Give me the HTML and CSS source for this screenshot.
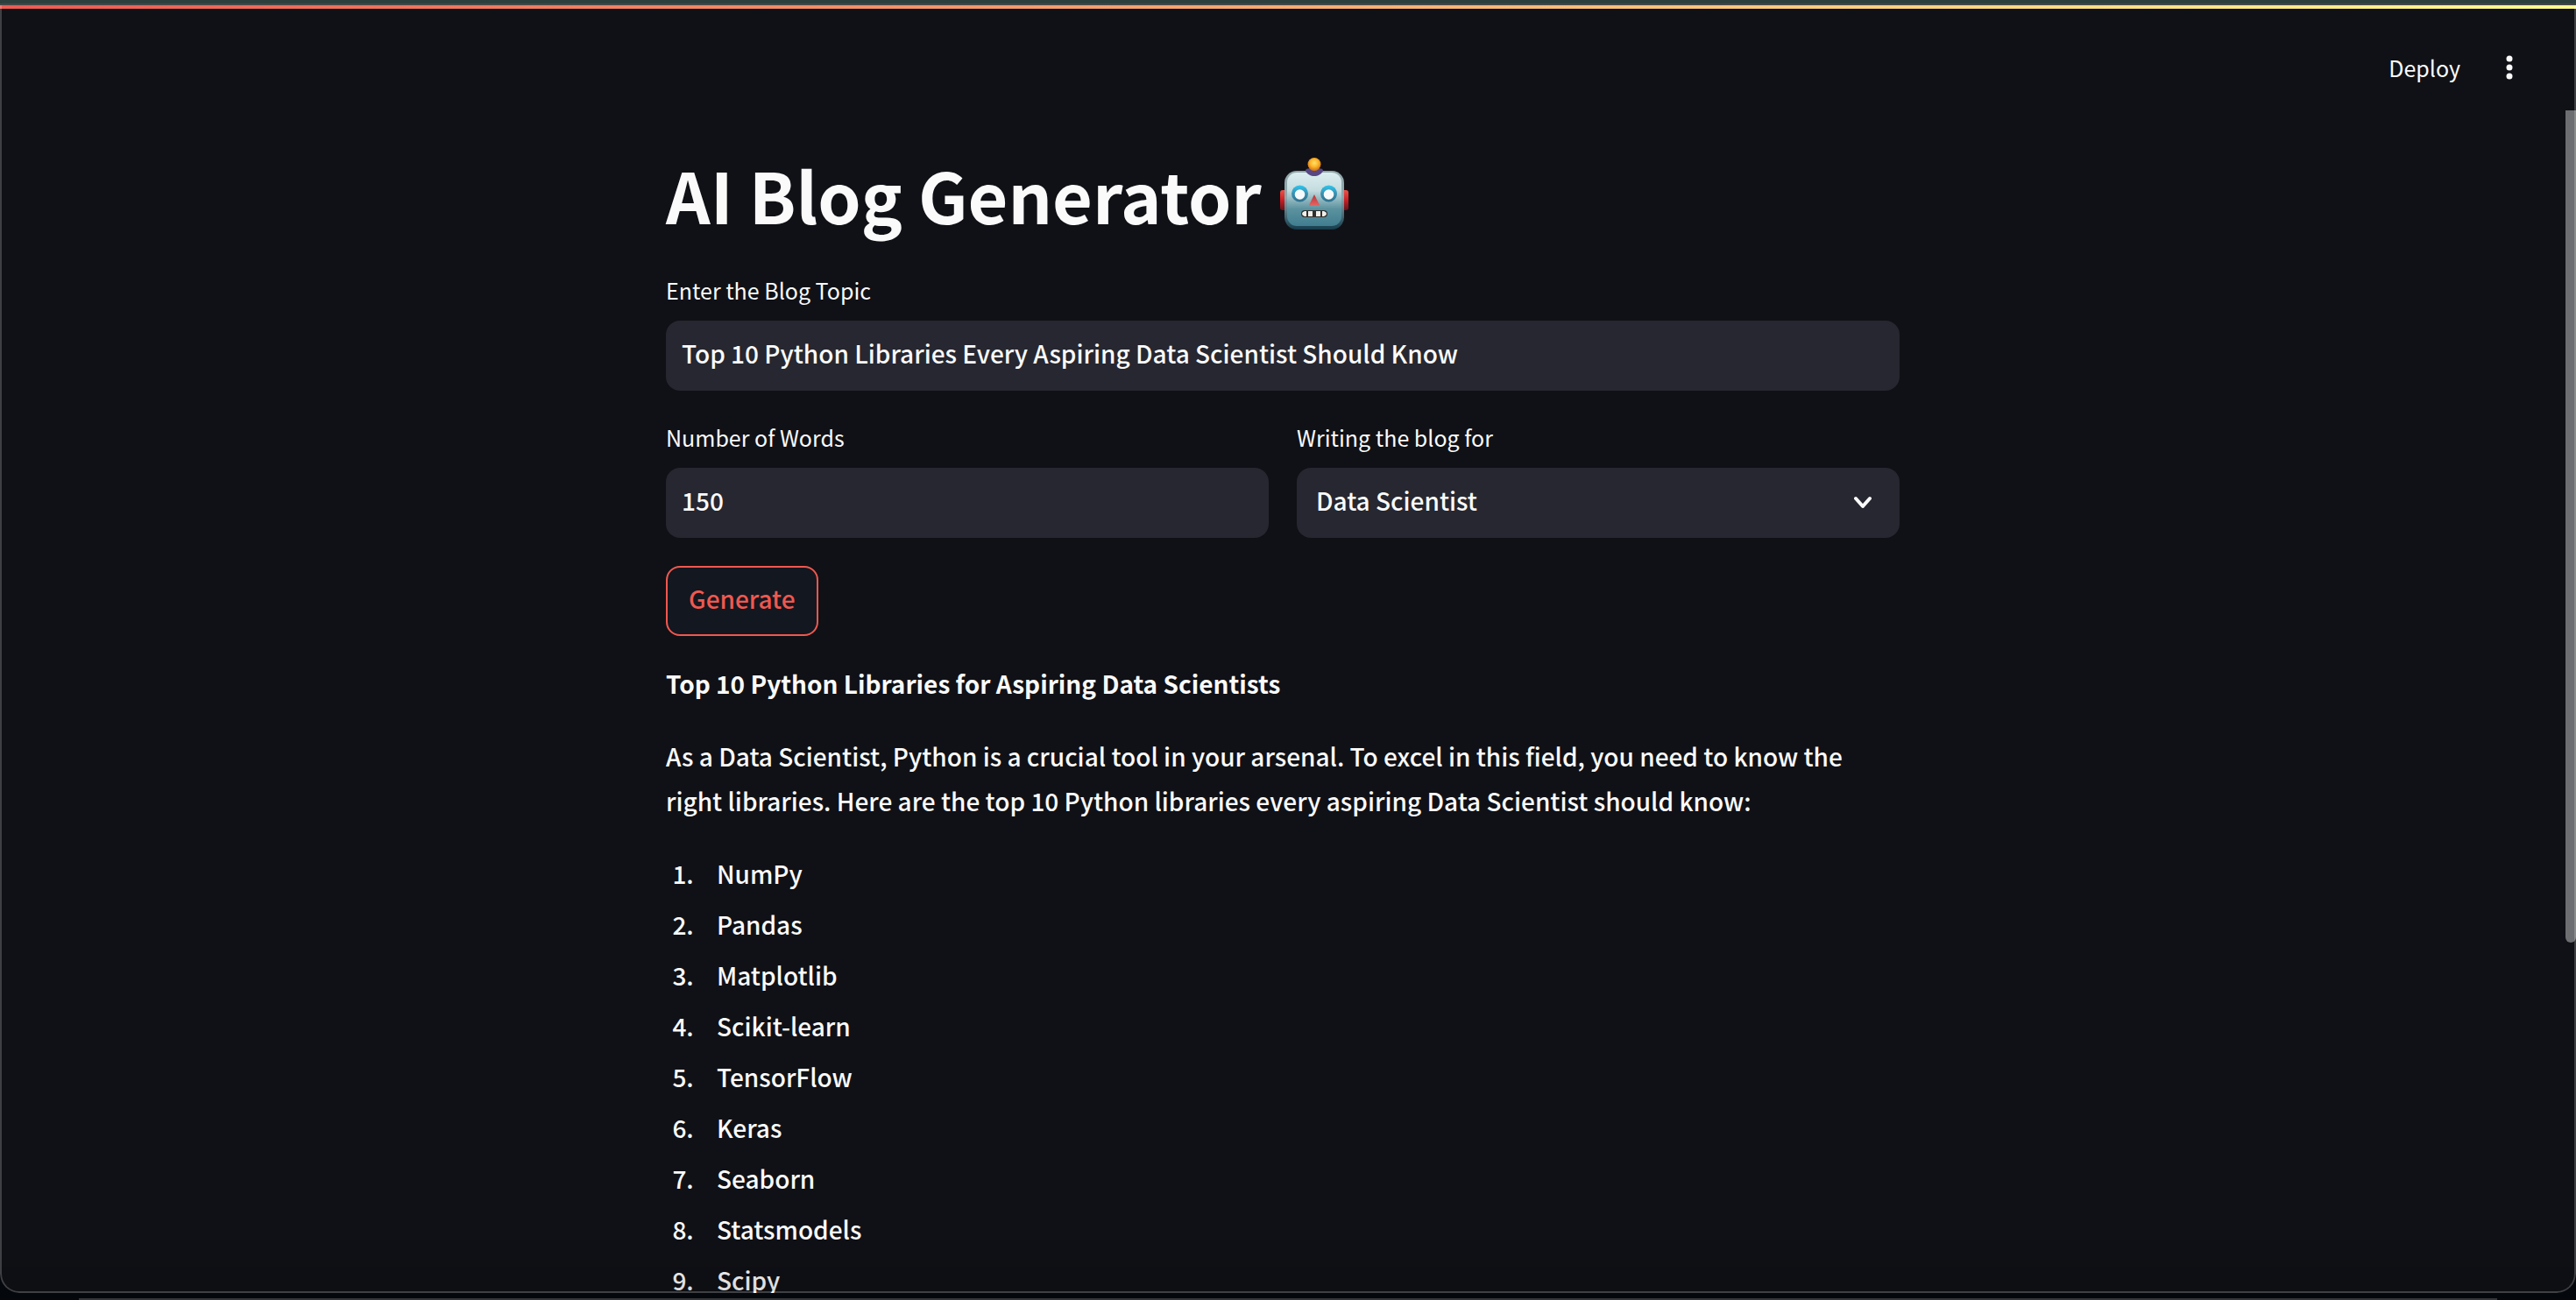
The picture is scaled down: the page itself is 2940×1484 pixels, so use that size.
FILE: index.html
```html
<!DOCTYPE html>
<html lang="en">
<head>
<meta charset="utf-8">
<title>AI Blog Generator</title>
<link rel="stylesheet" href="styles.css">
</head>
<body>
<div class="window">
  <div class="decoration"></div>
  <header class="toolbar">
    <button class="deploy" type="button">Deploy</button>
    <button class="menu" type="button" aria-label="Main menu">
      <svg class="menu-icon" viewBox="0 0 40 40" aria-hidden="true">
        <circle cx="20" cy="10" r="3.5"/><circle cx="20" cy="20" r="3.5"/><circle cx="20" cy="30" r="3.5"/>
      </svg>
    </button>
  </header>
  <div class="view">
    <main class="content">
      <h1 class="title"><span>AI Blog Generator</span>
        <svg class="robot" viewBox="0 0 80 90" role="img" aria-label="robot">
          <defs>
            <linearGradient id="face" x1="0" y1="0" x2="0" y2="1">
              <stop offset="0" stop-color="#dceeef"/><stop offset=".33" stop-color="#c5dcdf"/><stop offset=".68" stop-color="#5b929f"/><stop offset="1" stop-color="#407d90"/>
            </linearGradient>
            <linearGradient id="shell" x1="0" y1="0" x2="0" y2="1">
              <stop offset="0" stop-color="#94a9ac"/><stop offset=".45" stop-color="#8aa9af"/><stop offset="1" stop-color="#153c4c"/>
            </linearGradient>
            <linearGradient id="ear" x1="0" y1="0" x2="0" y2="1">
              <stop offset="0" stop-color="#ef5148"/><stop offset=".5" stop-color="#c91f25"/><stop offset="1" stop-color="#63141b"/>
            </linearGradient>
            <linearGradient id="eye" x1="0" y1="0" x2="0" y2="1">
              <stop offset="0" stop-color="#2fc6ee"/><stop offset=".5" stop-color="#3a90b0"/><stop offset="1" stop-color="#2f6f8c"/>
            </linearGradient>
            <linearGradient id="nose" x1="0" y1="0" x2="0" y2="1">
              <stop offset="0" stop-color="#b4343a"/><stop offset="1" stop-color="#e86561"/>
            </linearGradient>
            <radialGradient id="bulb" cx=".5" cy=".4" r=".55">
              <stop offset="0" stop-color="#ffe16a"/><stop offset=".55" stop-color="#fdb52b"/><stop offset="1" stop-color="#d87a13"/>
            </radialGradient>
          </defs>
          <rect x="1" y="40" width="8" height="23" rx="3" fill="url(#ear)"/>
          <rect x="71" y="40" width="8" height="23" rx="3" fill="url(#ear)"/>
          <rect x="6" y="18" width="68" height="67" rx="14" fill="url(#shell)"/>
          <rect x="9" y="20" width="62" height="61" rx="11" fill="url(#face)"/>
          <path d="M30 18c0-3 4-3 10-3s10 0 10 3c-2 4-6 6-10 6s-8-2-10-6z" fill="#594783"/>
          <circle cx="40" cy="10.500" r="7.500" fill="url(#bulb)"/>
          <circle cx="23.500" cy="44" r="9.500" fill="url(#eye)"/>
          <circle cx="56.500" cy="44" r="9.500" fill="url(#eye)"/>
          <circle cx="23.500" cy="45" r="5.800" fill="#f7fafb"/>
          <circle cx="56.500" cy="45" r="5.800" fill="#f7fafb"/>
          <path d="M40 45l6 12q0 1-1 1H35q-1 0-1-1z" fill="url(#nose)"/>
          <rect x="25" y="63" width="30" height="8" rx="4" fill="#30302f"/>
          <path d="M29 64h2v6h-2q-3-1-3-3t3-3zM33 64h5v6h-5zM42 64h5v6h-5zM49 64h2q3 1 3 3t-3 3h-2z" fill="#f1efe9"/>
        </svg>
      </h1>
      <form class="form">
        <div class="field">
          <label class="label" for="topic">Enter the Blog Topic</label>
          <input class="control" id="topic" type="text" value="Top 10 Python Libraries Every Aspiring Data Scientist Should Know">
        </div>
        <div class="columns">
          <div class="field">
            <label class="label" for="words">Number of Words</label>
            <input class="control" id="words" type="text" value="150">
          </div>
          <div class="field">
            <label class="label" for="audience">Writing the blog for</label>
            <div class="select-box">
              <select class="control select" id="audience"><option>Data Scientist</option></select>
              <svg class="chevron" viewBox="0 0 20 18" aria-hidden="true"><path d="M2 4l8 9 8-9"/></svg>
            </div>
          </div>
        </div>
        <button class="generate" type="button">Generate</button>
      </form>
      <article class="post">
        <p><strong>Top 10 Python Libraries for Aspiring Data Scientists</strong></p>
        <p>As a Data Scientist, Python is a crucial tool in your arsenal. To excel in this field, you need to know the right libraries. Here are the top 10 Python libraries every aspiring Data Scientist should know:</p>
        <ol class="libraries">
          <li>NumPy</li>
          <li>Pandas</li>
          <li>Matplotlib</li>
          <li>Scikit-learn</li>
          <li>TensorFlow</li>
          <li>Keras</li>
          <li>Seaborn</li>
          <li>Statsmodels</li>
          <li>Scipy</li>
        </ol>
      </article>
    </main>
    <div class="scrollbar"><div class="thumb"></div></div>
  </div>
</div>
<div class="behind"></div>
</body>
</html>
```
FILE: styles.css
```css
* { box-sizing: border-box; }

body {
  margin: 0;
  height: 100vh;
  display: flex;
  flex-direction: column;
  gap: 6px;
  overflow: hidden;
  background: #04080d;
  color: #fafafa;
  font-family: "Noto Sans CJK SC", "Noto Sans", sans-serif;
  font-size: 28px;
  font-weight: 500;
  line-height: 51px;
}

button, input, select { font: inherit; color: inherit; }

.window {
  position: relative;
  flex: 1;
  min-height: 0;
  display: flex;
  flex-direction: column;
  overflow: hidden;
  border-radius: 0 0 22px 22px;
  background: #101116;
}

/* Window edge and the shade along its bottom lie over the page */
.window::after {
  content: "";
  position: absolute;
  inset: 6px 0 0;
  border: 2px solid rgba(255, 255, 255, 0.2);
  border-top: 0;
  border-radius: 0 0 22px 22px;
  background: linear-gradient(transparent calc(100% - 60px), rgba(0, 0, 0, 0.12));
  pointer-events: none;
}

.decoration {
  flex: none;
  height: 10px;
  border-top: 4px solid #2d3f3d;
  background: linear-gradient(#454746, #454746) top / 100% 2px no-repeat, linear-gradient(90deg, #ee5a52, #fffb90);
}

.toolbar {
  flex: none;
  height: 116px;
  padding: 18px 56px 0;
  display: flex;
  align-items: center;
  justify-content: flex-end;
  gap: 36px;
}

.deploy, .menu { padding: 0; border: 0; background: none; }
.deploy { font-size: 25px; font-weight: 400; }
.menu { display: flex; }
.menu-icon { width: 40px; height: 40px; fill: #fafafa; }

.view { flex: 1; min-height: 0; display: flex; }

.content {
  flex: none;
  width: 1408px;
  max-width: 100%;
  margin: 0 auto;
  padding-top: 43px;
}

.title {
  margin: 0;
  display: flex;
  align-items: center;
  gap: 20px;
  font-size: 79px;
  font-weight: 700;
  line-height: 106px;
}

.robot { width: 80px; height: 90px; }

.form {
  margin-top: 35px;
  display: flex;
  flex-direction: column;
  align-items: flex-start;
  gap: 32px;
}

.field { width: 100%; }
.columns { width: 100%; display: grid; grid-template-columns: 1fr 1fr; gap: 32px; }

.label { display: block; padding-bottom: 14px; font-size: 25px; font-weight: 400; line-height: 42px; }

.control {
  display: block;
  width: 100%;
  height: 80px;
  padding: 0 18px 6px;
  border: 0;
  border-radius: 16px;
  background: #262730;
  outline: 0;
}

.select-box { position: relative; }
.select { padding: 0 22px 6px; appearance: none; }

.chevron {
  position: absolute;
  right: 32px;
  top: 31px;
  width: 20px;
  height: 18px;
  fill: none;
  stroke: #fafafa;
  stroke-width: 4;
  stroke-linecap: round;
  stroke-linejoin: round;
  pointer-events: none;
}

.generate {
  height: 80px;
  padding: 0 24px 6px;
  border: 2px solid #f0584f;
  border-radius: 16px;
  background: #131720;
  color: #f0584f;
}

.post { margin-top: 29px; }
.post p { margin: 0 0 32px; }

.libraries { margin: 0; padding-left: 38px; }
.libraries li { padding-left: 20px; margin-bottom: 7px; }

.scrollbar { flex: none; width: 12px; }
.thumb { height: 64vh; border-radius: 0 0 6px 6px; background: #6d6e71; }

/* Top edge of the window underneath */
.behind {
  flex: none;
  height: 2px;
  margin: 0 90px;
  background: #343638;
}
```
